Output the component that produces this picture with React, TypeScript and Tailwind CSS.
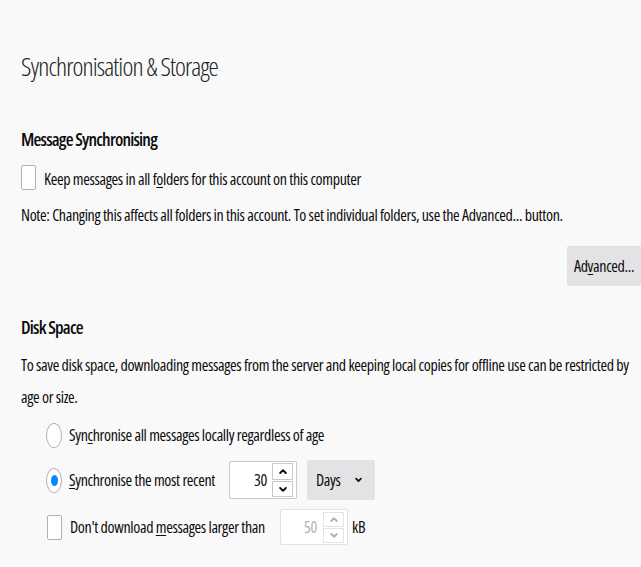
import React from "react";

function Checkbox() {
  return <div className="h-[25px] w-[15px] shrink-0 rounded-[2px] border border-[#b1b1b3] bg-white" />;
}

function Radio({ checked }: { checked?: boolean }) {
  return (
    <div className="flex h-[25px] w-[16px] shrink-0 items-center justify-center rounded-[50%] border border-[#b1b1b3] bg-white">
      {checked && <div className="h-[11px] w-[7px] rounded-[50%] bg-[#0a84ff]" />}
    </div>
  );
}

function Chevron({ down, color }: { down?: boolean; color: string }) {
  return (
    <svg width="8" height="7" viewBox="0 0 8 7" className={down ? "rotate-180" : ""}>
      <path d="M1.2 5 L4 2.2 L6.8 5" fill="none" stroke={color} strokeWidth="1.9" strokeLinecap="round" strokeLinejoin="round" />
    </svg>
  );
}

function Spinner({ value, disabled }: { value: string; disabled?: boolean }) {
  return (
    <div
      className={
        disabled
          ? "flex h-[36px] w-[68px] items-center rounded-[2px] border border-[#e3e3e5] bg-white pr-[3px]"
          : "flex h-[38px] w-[68px] items-center rounded-[2px] border border-[#c8c8ca] bg-white pr-[3px]"
      }
    >
      <div className={disabled ? "flex-1 pr-[6px] text-right text-[#b1b1b3]" : "flex-1 pr-[5px] text-right"}>{value}</div>
      <div className="flex flex-col gap-[1px]">
        <div className={disabled ? "flex h-[15px] w-[21px] items-center justify-center border border-[#e3e3e5]" : "flex h-[17px] w-[21px] items-center justify-center border border-[#c8c8ca]"}>
          <Chevron color={disabled ? "#b1b1b3" : "#0c0c0d"} />
        </div>
        <div className={disabled ? "flex h-[15px] w-[21px] items-center justify-center border border-[#e3e3e5]" : "flex h-[16px] w-[21px] items-center justify-center border border-[#c8c8ca]"}>
          <Chevron down color={disabled ? "#b1b1b3" : "#0c0c0d"} />
        </div>
      </div>
    </div>
  );
}

export default function App() {
  return (
    <div className="min-h-[567px] bg-[#f9f9fa] pl-[21px] pt-[51px] font-['Open_Sans',sans-serif] text-[16px] tracking-[-0.35px] text-[#0c0c0d] [font-stretch:75%]">
      <div className="h-[30px] text-[26px] leading-[30px] font-light tracking-[-0.9px] text-[#222]">Synchronisation &amp; Storage</div>

      <div className="mt-[48px] h-[20px] text-[18px] leading-[20px] font-semibold tracking-[-0.8px]">Message Synchronising</div>

      <div className="mt-[16px] flex h-[25px] items-center gap-[8px]">
        <Checkbox />
        <span className="pt-[3px]">
          Keep messages in all f<span className="underline underline-offset-2">o</span>lders for this account on this computer
        </span>
      </div>

      <div className="mt-[15px] h-[20px] leading-[20px]">
        Note: Changing this affects all folders in this account. To set individual folders, use the Advanced... button.
      </div>

      <div className="mt-[21px] flex justify-end">
        <div className="flex h-[40px] w-[74px] items-center justify-center rounded-[2px] bg-[#e3e3e5]">
          Ad<span className="underline underline-offset-2">v</span>anced...
        </div>
      </div>

      <div className="mt-[31px] h-[20px] text-[18px] leading-[20px] font-semibold tracking-[-0.8px]">Disk Space</div>

      <div className="mt-[12px] pr-[2px] leading-[32px]">
        To save disk space, downloading messages from the server and keeping local copies for offline use can be restricted by age or size.
      </div>

      <div className="mt-[9px] flex flex-col pl-[25px]">
        <div className="flex h-[26px] items-center gap-[7px]">
          <Radio />
          <span>
            Syn<span className="underline underline-offset-2">c</span>hronise all messages locally regardless of age
          </span>
        </div>

        <div className="mt-[12px] flex h-[40px] items-center">
          <Radio checked />
          <span className="ml-[7px] w-[160px]">
            <span className="underline underline-offset-2">S</span>ynchronise the most recent
          </span>
          <Spinner value="30" />
          <div className="ml-[10px] flex h-[40px] w-[68px] items-center gap-[14px] rounded-[2px] bg-[#e3e3e5] pl-[9px]">
            <span>Days</span>
            <svg width="7" height="6" viewBox="0 0 8 7">
              <path d="M1.2 2 L4 4.8 L6.8 2" fill="none" stroke="#0c0c0d" strokeWidth="2" strokeLinecap="round" strokeLinejoin="round" />
            </svg>
          </div>
        </div>

        <div className="mt-[9px] flex h-[36px] items-center">
          <div className="ml-[1px]">
            <Checkbox />
          </div>
          <span className="ml-[8px] w-[210px]">
            Don't download <span className="underline underline-offset-2">m</span>essages larger than
          </span>
          <Spinner value="50" disabled />
          <span className="ml-[4px]">kB</span>
        </div>
      </div>
    </div>
  );
}
